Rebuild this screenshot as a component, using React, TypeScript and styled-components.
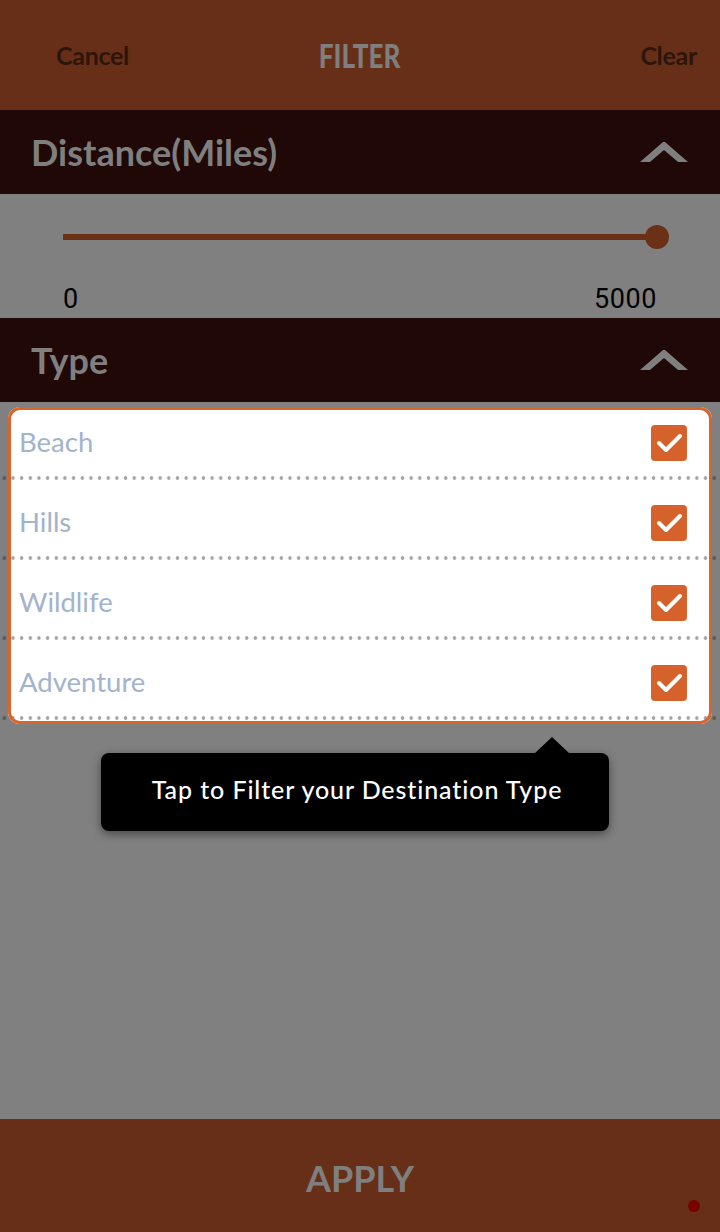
import React from 'react';
import styled, { createGlobalStyle } from 'styled-components';

const GlobalStyle = createGlobalStyle`
  html, body {
    margin: 0;
    padding: 0;
  }
  body {
    font-family: Lato, 'Noto Sans', sans-serif;
    background: #808080;
  }
  * {
    box-sizing: border-box;
  }
`;

const TYPES = ['Beach', 'Hills', 'Wildlife', 'Adventure'];

const ChevronUp = () => (
  <svg width="48" height="20" viewBox="0 0 48 20">
    <polygon points="0,20 23,0 25,0 48,20 38,20 24,8 10,20" fill="#7f7f7f" />
  </svg>
);

const CheckMark = () => (
  <svg width="36" height="36" viewBox="0 0 36 36">
    <polyline
      points="8,18 15,25 29,11"
      fill="none"
      stroke="#ffffff"
      strokeWidth="4"
      strokeLinecap="round"
      strokeLinejoin="round"
    />
  </svg>
);

const App = () => {
  return (
    <Page>
      <GlobalStyle />
      <TopBar>
        <TopAction>Cancel</TopAction>
        <Title>FILTER</Title>
        <TopAction $right>Clear</TopAction>
      </TopBar>

      <SectionHeader>
        <SectionTitle>Distance(Miles)</SectionTitle>
        <ChevronUp />
      </SectionHeader>

      <SliderPanel>
        <SliderTrack>
          <SliderFill />
          <SliderThumb />
        </SliderTrack>
        <SliderLabels>
          <span>0</span>
          <span>5000</span>
        </SliderLabels>
      </SliderPanel>

      <SectionHeader>
        <SectionTitle>Type</SectionTitle>
        <ChevronUp />
      </SectionHeader>

      <Content>
        <Spotlight>
          {TYPES.map((t) => (
            <TypeRow key={t}>
              <TypeBody>
                <TypeLabel>{t}</TypeLabel>
                <CheckBox>
                  <CheckMark />
                </CheckBox>
              </TypeBody>
              <DottedLine />
            </TypeRow>
          ))}
        </Spotlight>

        <Tooltip>Tap to Filter your Destination Type</Tooltip>
      </Content>

      <ApplyBar>
        APPLY
        <RecordDot />
      </ApplyBar>
    </Page>
  );
};

const Page = styled.div`
  width: 720px;
  height: 1232px;
  display: flex;
  flex-direction: column;
  background: #808080;
  overflow: hidden;
`;

const TopBar = styled.div`
  height: 110px;
  flex-shrink: 0;
  background: #672f17;
  display: grid;
  grid-template-columns: 1fr auto 1fr;
  align-items: center;
  padding: 0 23px;
`;

const TopAction = styled.div<{ $right?: boolean }>`
  justify-self: ${(p) => (p.$right ? 'end' : 'start')};
  margin-left: ${(p) => (p.$right ? '0' : '33px')};
  font-family: Lato, sans-serif;
  font-weight: 700;
  font-size: 25px;
  color: #2e150b;
  letter-spacing: -0.3px;
`;

const Title = styled.div`
  font-family: Lato, sans-serif;
  font-weight: 900;
  font-size: 33px;
  color: #7f7f7f;
  transform: scaleX(0.79);
`;

const SectionHeader = styled.div`
  height: 84px;
  flex-shrink: 0;
  background: #200806;
  display: flex;
  align-items: center;
  justify-content: space-between;
  padding: 0 32px 0 31px;
`;

const SectionTitle = styled.div`
  font-family: Lato, sans-serif;
  font-weight: 700;
  font-size: 36px;
  color: #7f7f7f;
`;

const SliderPanel = styled.div`
  height: 124px;
  flex-shrink: 0;
  background: #808080;
  display: flex;
  flex-direction: column;
  padding: 31px 51px 0 63px;
`;

const SliderTrack = styled.div`
  display: flex;
  align-items: center;
  height: 24px;
`;

const SliderFill = styled.div`
  flex: 1;
  height: 6px;
  background: #6b3116;
  margin-right: -12px;
`;

const SliderThumb = styled.div`
  width: 24px;
  height: 24px;
  border-radius: 50%;
  background: #6b3116;
  position: relative;
`;

const SliderLabels = styled.div`
  display: flex;
  justify-content: space-between;
  margin-top: 37px;
  padding-right: 12px;
  font-family: Roboto, sans-serif;
  font-size: 27px;
  line-height: 27px;
  letter-spacing: 0.6px;
  color: #000000;
`;

const Content = styled.div`
  flex: 1;
  position: relative;
  padding-top: 5px;
`;

const Spotlight = styled.div`
  position: relative;
  margin: 0 8px;
  padding: 3px 3px 4px;
  background: #ffffff;
  border-radius: 12px;

  &::after {
    content: '';
    position: absolute;
    inset: 0;
    border: 3px solid #d9642c;
    border-radius: 12px;
    pointer-events: none;
  }
`;

const TypeRow = styled.div`
  display: flex;
  flex-direction: column;
  padding-top: 10px;

  &:first-child {
    padding-top: 0;
  }
`;

const TypeBody = styled.div`
  height: 66px;
  display: flex;
  align-items: center;
  justify-content: space-between;
  padding: 0 22px 0 8px;
`;

const TypeLabel = styled.div`
  font-family: Lato, sans-serif;
  font-size: 27.5px;
  color: #a3b3cc;
  margin-top: -4px;
`;

const CheckBox = styled.div`
  width: 36px;
  height: 36px;
  border-radius: 4px;
  background: #d6622b;
  display: flex;
  align-items: center;
  justify-content: center;
`;

const dots = (c: string) =>
  `radial-gradient(circle at 4.33px 2px, ${c} 1.5px, transparent 2.1px)`;

const DottedLine = styled.div`
  height: 4px;
  margin: 0 -11px;
  padding: 0 11px;
  background-image: ${dots('#a5a5a5')}, linear-gradient(#ffffff, #ffffff),
    ${dots('#565656')};
  background-clip: content-box, content-box, padding-box;
  background-origin: padding-box;
  background-size: 8.67px 4px, auto, 8.67px 4px;
  background-repeat: repeat-x, no-repeat, repeat-x;
`;

const Tooltip = styled.div`
  position: absolute;
  top: 351px;
  left: 101px;
  width: 508px;
  height: 78px;
  border-radius: 8px;
  background: #000000;
  box-shadow: 0 3px 10px rgba(0, 0, 0, 0.45);
  display: flex;
  align-items: center;
  justify-content: center;
  font-family: Lato, sans-serif;
  font-weight: 500;
  font-size: 25px;
  letter-spacing: 0.9px;
  color: #ffffff;
  padding: 0 0 6px 4px;

  &::before {
    content: '';
    position: absolute;
    top: -16px;
    left: 434px;
    border-left: 17px solid transparent;
    border-right: 17px solid transparent;
    border-bottom: 16px solid #000000;
  }
`;

const ApplyBar = styled.div`
  height: 113px;
  flex-shrink: 0;
  position: relative;
  background: #672f17;
  display: flex;
  align-items: center;
  justify-content: center;
  font-family: Lato, sans-serif;
  font-weight: 700;
  font-size: 36px;
  color: #7f7f7f;
  padding-top: 4px;
`;

const RecordDot = styled.span`
  position: absolute;
  left: 688px;
  top: 81px;
  width: 12px;
  height: 12px;
  border-radius: 50%;
  background: #7a0000;
`;

export default App;
